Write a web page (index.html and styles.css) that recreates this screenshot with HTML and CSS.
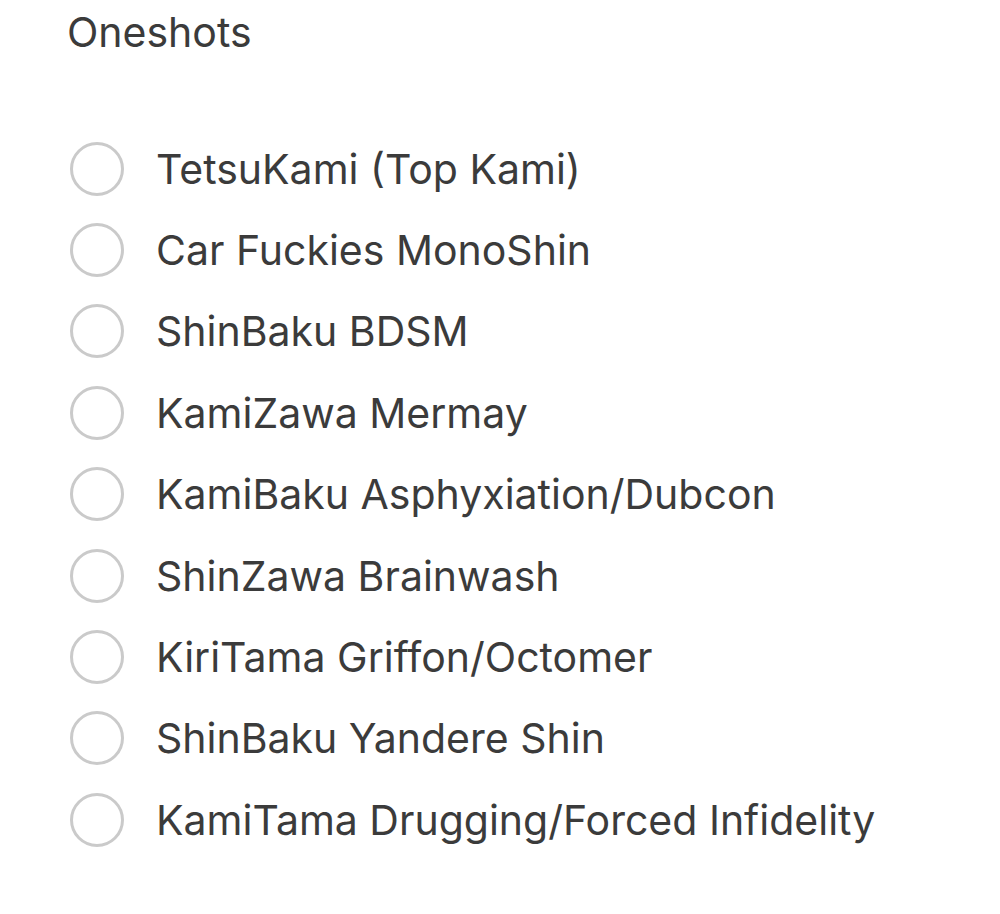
FILE: index.html
```html
<!DOCTYPE html>
<html>
<head>
<meta charset="utf-8">
<link rel="stylesheet" href="styles.css">
</head>
<body>
<div class="page">
  <h1 class="title">Oneshots</h1>
  <ul class="list">
    <li class="row"><span class="radio"></span><span class="label">TetsuKami (Top Kami)</span></li>
    <li class="row"><span class="radio"></span><span class="label">Car Fuckies MonoShin</span></li>
    <li class="row"><span class="radio"></span><span class="label">ShinBaku BDSM</span></li>
    <li class="row"><span class="radio"></span><span class="label">KamiZawa Mermay</span></li>
    <li class="row"><span class="radio"></span><span class="label">KamiBaku Asphyxiation/Dubcon</span></li>
    <li class="row"><span class="radio"></span><span class="label">ShinZawa Brainwash</span></li>
    <li class="row"><span class="radio"></span><span class="label">KiriTama Griffon/Octomer</span></li>
    <li class="row"><span class="radio"></span><span class="label">ShinBaku Yandere Shin</span></li>
    <li class="row"><span class="radio"></span><span class="label">KamiTama Drugging/Forced Infidelity</span></li>
  </ul>
</div>
</body>
</html>
```
FILE: styles.css
```css
html, body {
  margin: 0;
  padding: 0;
  background: #ffffff;
}
.page {
  padding: 8px 0 0 67px;
  font-family: Inter, "Liberation Sans", sans-serif;
  color: #3b3b3b;
}
.title {
  margin: 0;
  font-size: 41px;
  font-weight: 400;
  line-height: 48px;
}
.list {
  list-style: none;
  margin: 0;
  padding: 72px 0 0 3px;
}
.row {
  display: flex;
  align-items: center;
  height: 81.4px;
  gap: 32px;
}
.radio {
  box-sizing: border-box;
  width: 54px;
  height: 54px;
  border: 3px solid #cacaca;
  border-radius: 50%;
  flex: none;
}
.label {
  font-size: 41px;
  line-height: 48px;
}
```
